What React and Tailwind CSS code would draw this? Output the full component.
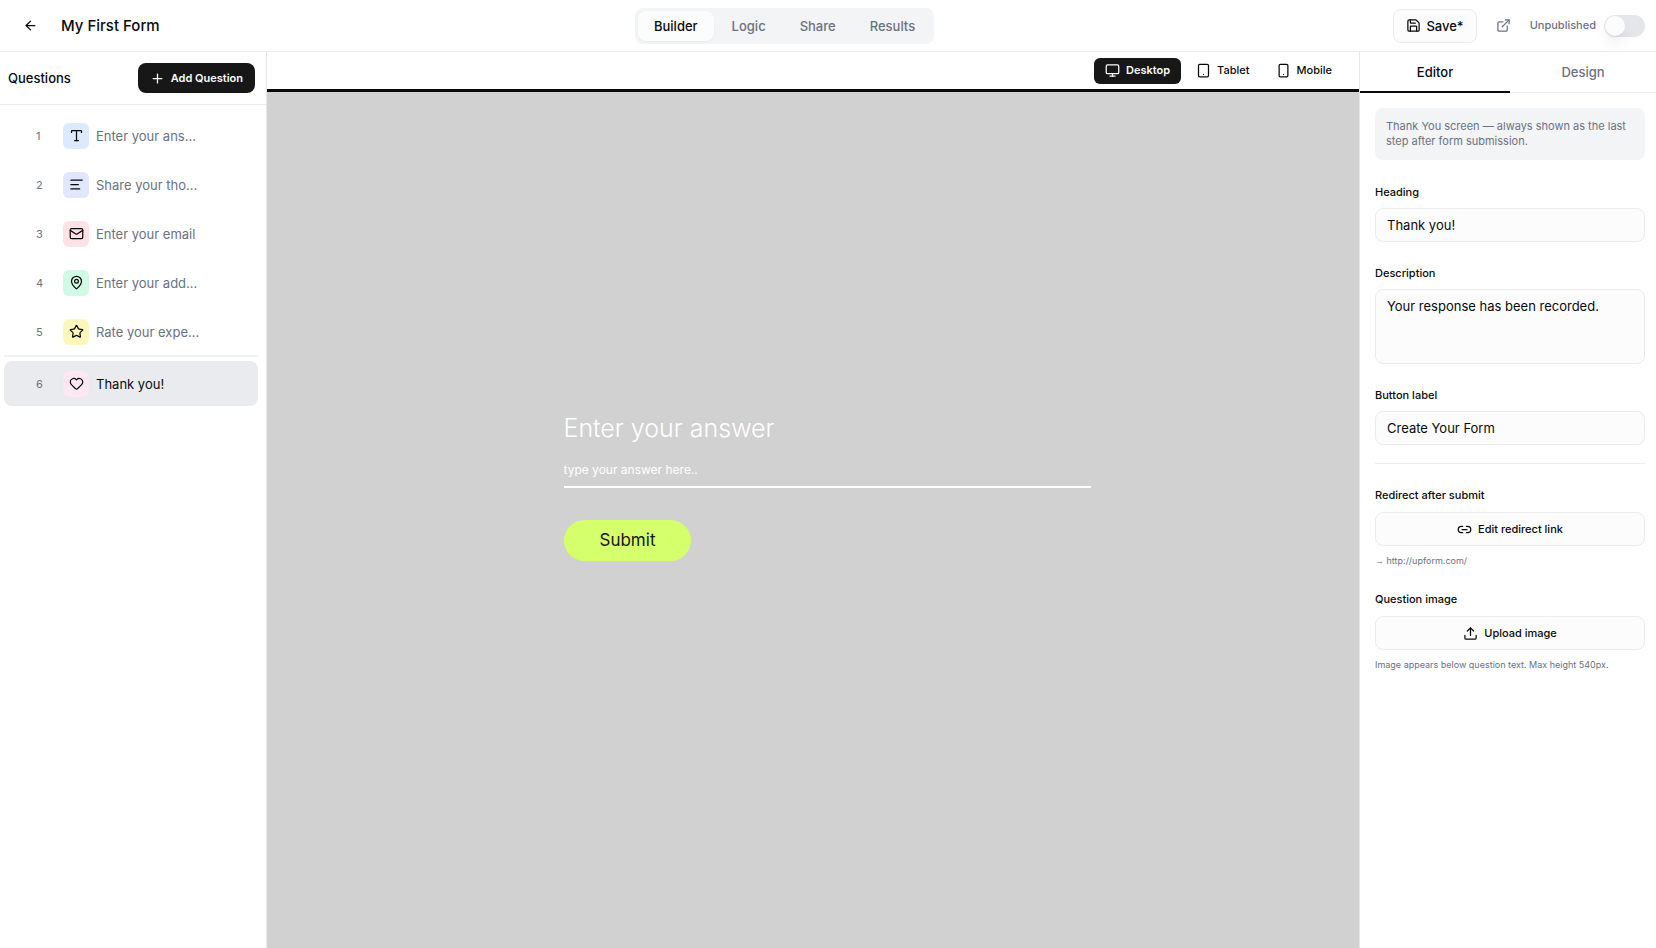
import React, { useState } from 'react'
import {
    ArrowLeft, Plus, Type, TextAlignStart, Mail, MapPin, Star, Heart,
    Monitor, Tablet, Smartphone, Save, ExternalLink, Link2, Upload
} from 'lucide-react'

const pages = ["Builder", "Logic", "Share", "Results"]

const questions = [
    { id: 1, title: "Enter your answer", icon: Type, color: "bg-blue-100" },
    { id: 2, title: "Share your thoughts", icon: TextAlignStart, color: "bg-indigo-100" },
    { id: 3, title: "Enter your email", icon: Mail, color: "bg-[#ffe2e5]" },
    { id: 4, title: "Enter your address", icon: MapPin, color: "bg-emerald-100" },
    { id: 5, title: "Rate your experience", icon: Star, color: "bg-[#fef7bc]" },
]

const thankYou = { id: 6, title: "Thank you!", icon: Heart, color: "bg-pink-100" }

const devices = [
    { name: "Desktop", icon: Monitor },
    { name: "Tablet", icon: Tablet },
    { name: "Mobile", icon: Smartphone },
]

// Long titles are cut to keep the list on one line
const shorten = (title) => (title.length > 16 ? title.slice(0, 14) + "..." : title)

const Header = () => {
    const [page, setPage] = useState("Builder")
    const [published, setPublished] = useState(false)

    return (
        <header className='flex h-[52px] items-center justify-between border-b border-[#ececee] pl-[23px] pr-[11px]'>
            <div className='flex items-center gap-[23px] pr-4'>
                <button type="button" aria-label="Back">
                    <ArrowLeft className='h-[15px] w-[15px]'/>
                </button>
                <h1 className='text-[15px] font-medium leading-6'>My First Form</h1>
            </div>
            <nav className='flex gap-[2px] rounded-lg bg-[#f3f4f6] px-[3px] py-[3px]'>
                {pages.map((item) => (
                    <button
                        key={item}
                        type="button"
                        onClick={() => setPage(item)}
                        className={`h-[30px] rounded-lg px-4 text-[13px] font-medium leading-5 ${item === page ? "bg-[#fcfcfc] shadow-xs" : "text-gray-500"}`}
                    >
                        {item}
                    </button>
                ))}
            </nav>
            <div className='flex items-center'>
                <button type="button" className='flex h-[34px] items-center gap-[5px] rounded-lg border border-[#ececee] bg-[#fcfcfc] px-3 text-[13px] font-medium leading-5'>
                    <Save className='h-[15px] w-[15px]'/>
                    Save*
                </button>
                <a href="#preview" aria-label="Open preview" className='mx-[19px] text-gray-500'>
                    <ExternalLink className='h-[15px] w-[15px]'/>
                </a>
                <label htmlFor="published" className='mr-2 text-[11px] font-medium text-gray-500'>Unpublished</label>
                <input
                    id="published"
                    type="checkbox"
                    role="switch"
                    checked={published}
                    onChange={(e) => setPublished(e.target.checked)}
                    className='flex h-[22px] w-[41px] cursor-pointer appearance-none items-center rounded-full bg-[#e5e6eb] px-px before:h-5 before:w-5 before:rounded-full before:bg-[#fcfcfc] before:shadow-lg checked:justify-end checked:bg-[#171717]'
                />
            </div>
        </header>
    )
}

const QuestionRow = ({ item, active, onSelect }) => {
    const Icon = item.icon
    return (
        <button
            type="button"
            onClick={() => onSelect(item.id)}
            className={`flex h-[45px] w-full items-center rounded-lg pl-8 text-left leading-5 ${active ? "bg-[#eaebef]" : ""}`}
        >
            <span className='w-[27px] text-[11px] text-gray-500'>{item.id}</span>
            <span className={`flex h-[26px] w-[26px] items-center justify-center rounded-md ${item.color}`}>
                <Icon className='h-[15px] w-[15px]'/>
            </span>
            <span className={`pl-[7px] text-[13px] ${active ? "" : "text-gray-500"}`}>{shorten(item.title)}</span>
        </button>
    )
}

const Sidebar = () => {
    const [selected, setSelected] = useState(6)

    return (
        <aside className='w-[267px] shrink-0 border-r border-[#e5e6e8]'>
            <div className='flex h-[53px] items-center justify-between border-b border-[#ececf1] pl-2 pr-[11px]'>
                <h2 className='text-[13px] font-medium leading-5'>Questions</h2>
                <button type="button" className='flex h-[30px] items-center gap-1.5 rounded-lg bg-[#171717] px-3 text-[11px] font-semibold text-[#fcfcfc]'>
                    <Plus className='h-[15px] w-[15px]'/>
                    Add Question
                </button>
            </div>
            <div className='pl-1 pr-2 pt-2'>
                <div className='space-y-1'>
                    {questions.map((item) => (
                        <QuestionRow key={item.id} item={item} active={item.id === selected} onSelect={setSelected}/>
                    ))}
                </div>
                <div className='mt-px border-t-2 border-[#f1f2f4] pt-1'>
                    <QuestionRow item={thankYou} active={selected === 6} onSelect={setSelected}/>
                </div>
            </div>
        </aside>
    )
}

const Preview = () => {
    const [device, setDevice] = useState("Desktop")

    return (
        <main className='flex min-w-0 flex-1 flex-col'>
            <div className='flex h-[40px] items-center justify-end gap-1 border-b-[3px] border-[#0a0a0a] pr-4'>
                {devices.map(({ name, icon: Icon }) => (
                    <button
                        key={name}
                        type="button"
                        onClick={() => setDevice(name)}
                        className={`flex h-[26px] items-center gap-1.5 rounded-md px-[11px] text-[11px] ${name === device ? "bg-[#171717] font-semibold text-[#fcfcfc]" : "font-medium"}`}
                    >
                        <Icon className='h-[15px] w-[15px]'/>
                        {name}
                    </button>
                ))}
            </div>
            <div className='flex flex-1 flex-col items-center justify-center bg-[#d1d1d1] pb-[68px] pl-7'>
                <form className='w-full max-w-[527px]' onSubmit={(e) => e.preventDefault()}>
                    <label htmlFor="answer" className='block text-[25px] font-light leading-8 text-white'>Enter your answer</label>
                    <input
                        id="answer"
                        type="text"
                        placeholder="type your answer here.."
                        className='mt-[10px] block h-[34px] w-full border-b-2 border-white text-[12px] text-white outline-none placeholder:text-white'
                    />
                    <button type="submit" className='mt-8 h-[41px] rounded-full bg-[#d5ff6b] px-9 text-[17px] leading-6 text-[#171717]'>Submit</button>
                </form>
            </div>
        </main>
    )
}

const EditorPanel = () => {
    const [tab, setTab] = useState("Editor")
    const [form, setForm] = useState({
        heading: "Thank you!",
        description: "Your response has been recorded.",
        button: "Create Your Form",
    })

    const handleChange = (e) => {
        setForm({ ...form, [e.target.name]: e.target.value })
    }

    return (
        <aside className='w-[297px] shrink-0 border-l border-[#e5e6e8]'>
            <div className='grid h-[41px] grid-cols-[150px_1fr]'>
                {["Editor", "Design"].map((item) => (
                    <button
                        key={item}
                        type="button"
                        onClick={() => setTab(item)}
                        className={`text-[13px] font-medium leading-5 ${item === tab ? "border-b-2 border-[#0a0a0a]" : "border-b border-[#ececee] text-gray-500"}`}
                    >
                        {item}
                    </button>
                ))}
            </div>
            <div className='pb-4 pl-[15px] pr-[11px] pt-[15px]'>
                <p className='rounded-lg bg-[#f3f4f6] px-[11px] py-[11px] text-[11px] leading-[15px] text-gray-500'>
                    Thank You screen — always shown as the last step after form submission.
                </p>
                <div className='mt-6'>
                    <label htmlFor="heading" className='block text-[11px] font-medium leading-4'>Heading</label>
                    <input id="heading" name="heading" value={form.heading} onChange={handleChange} className='mt-2 block h-[34px] w-full rounded-lg border border-[#ececee] bg-[#fcfcfc] px-[11px] text-[13px]'/>
                </div>
                <div className='mt-[23px]'>
                    <label htmlFor="description" className='block text-[11px] font-medium leading-4'>Description</label>
                    <textarea id="description" name="description" value={form.description} onChange={handleChange} className='mt-2 block h-[75px] w-full resize-none rounded-lg border border-[#ececee] bg-[#fcfcfc] px-[11px] py-[7px] text-[13px] leading-[18px]'/>
                </div>
                <div className='mt-[23px]'>
                    <label htmlFor="button" className='block text-[11px] font-medium leading-4'>Button label</label>
                    <input id="button" name="button" value={form.button} onChange={handleChange} className='mt-2 block h-[34px] w-full rounded-lg border border-[#ececee] bg-[#fcfcfc] px-[11px] text-[13px]'/>
                </div>
                <div className='mt-[18px] border-t border-[#ececee] pt-[23px]'>
                    <h3 className='text-[11px] font-medium leading-4'>Redirect after submit</h3>
                    <button type="button" className='mt-[9px] flex h-[34px] w-full items-center justify-center gap-1.5 rounded-lg border border-[#ececee] bg-[#fcfcfc] text-[11px] font-medium'>
                        <Link2 className='h-[15px] w-[15px]'/>
                        Edit redirect link
                    </button>
                    <p className='mt-2 text-[9px] leading-[14px] text-gray-500'><span className='font-["Liberation_Sans",sans-serif]'>→</span> http://upform.com/</p>
                </div>
                <div className='mt-[23px]'>
                    <h3 className='text-[11px] font-medium leading-4'>Question image</h3>
                    <button type="button" className='mt-[9px] flex h-[34px] w-full items-center justify-center gap-1.5 rounded-lg border border-[#ececee] bg-[#fcfcfc] text-[11px] font-medium'>
                        <Upload className='h-[15px] w-[15px]'/>
                        Upload image
                    </button>
                    <p className='mt-2 text-[9px] leading-[14px] text-gray-500'>Image appears below question text. Max height 540px.</p>
                </div>
            </div>
        </aside>
    )
}

const App = () => {
    return (
        <div className='flex min-h-screen flex-col bg-white font-[Inter,sans-serif] text-[#0a0a0a]'>
            <Header/>
            <div className='flex flex-1'>
                <Sidebar/>
                <Preview/>
                <EditorPanel/>
            </div>
        </div>
    )
}

export default App
